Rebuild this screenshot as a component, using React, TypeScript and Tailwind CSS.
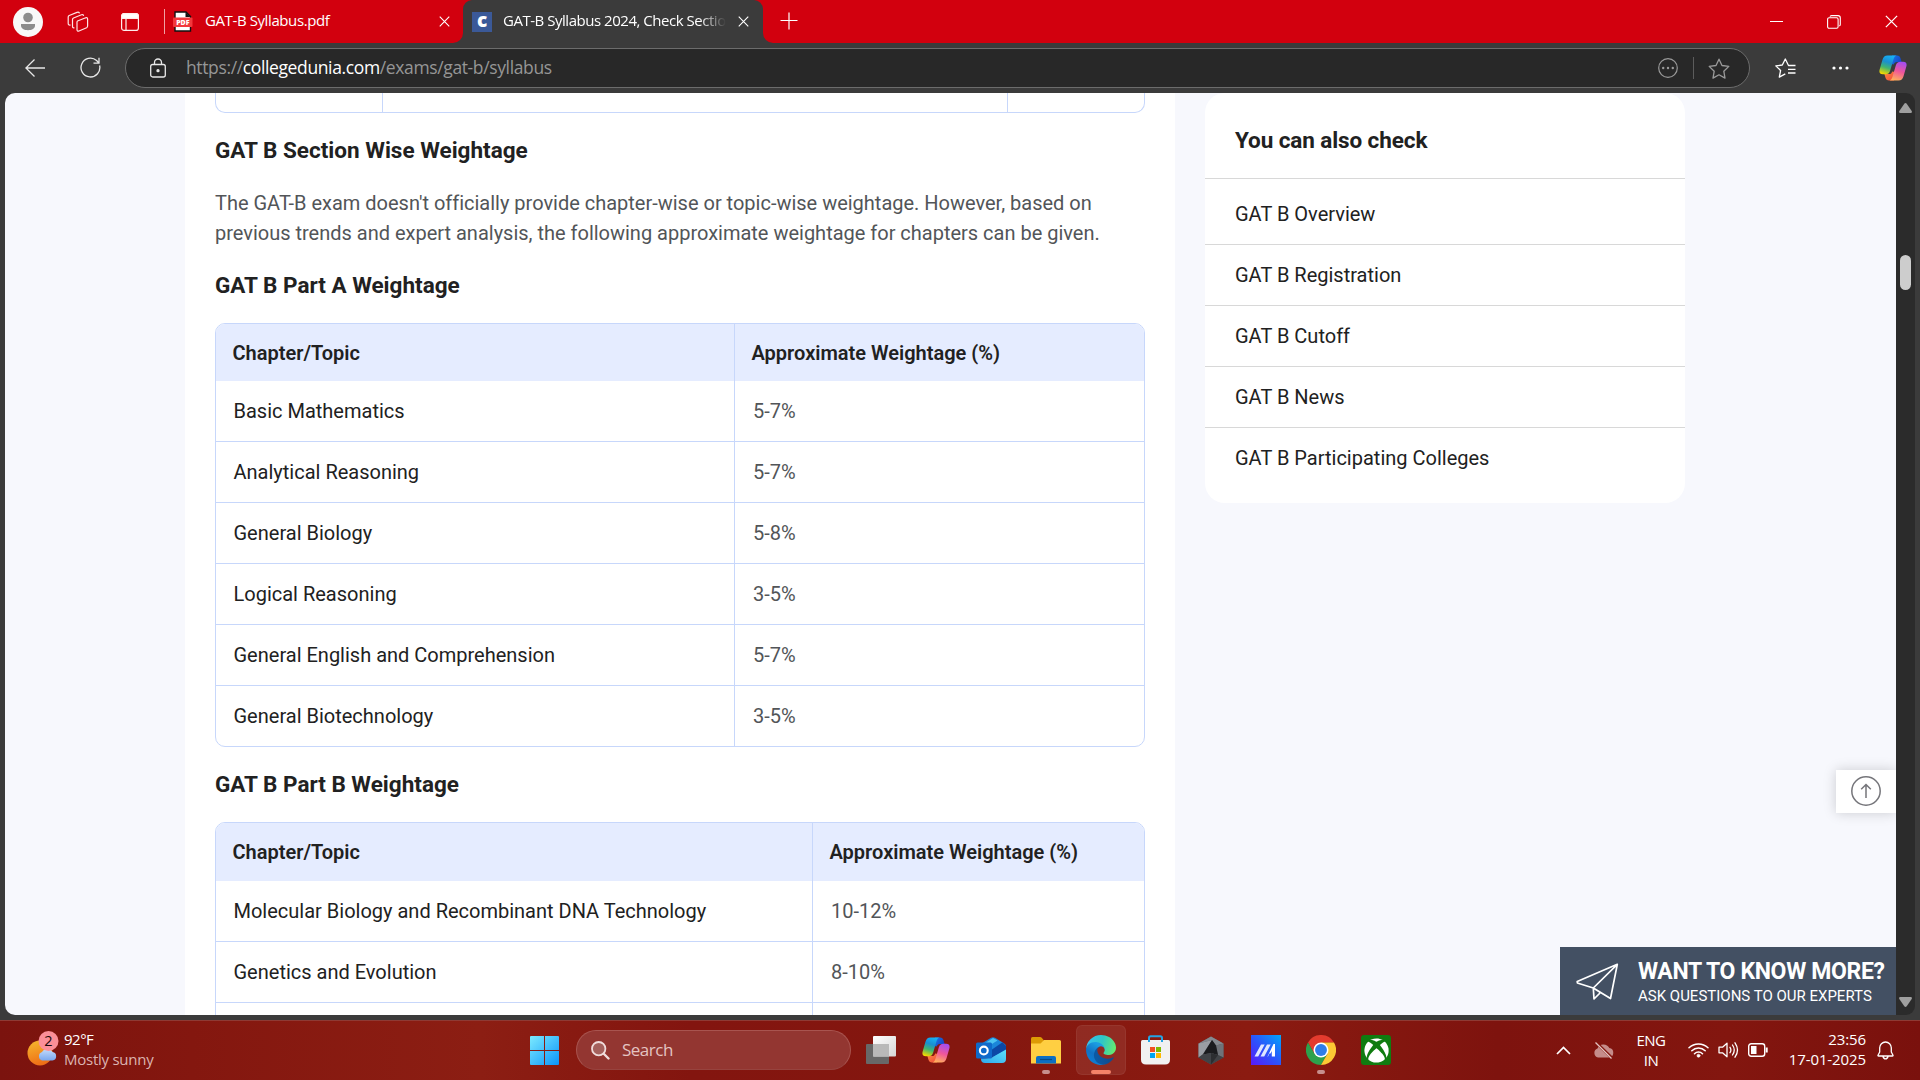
import React from "react";
import { FaXbox } from "react-icons/fa";

const PART_A = [
  ["Basic Mathematics", "5-7%"],
  ["Analytical Reasoning", "5-7%"],
  ["General Biology", "5-8%"],
  ["Logical Reasoning", "3-5%"],
  ["General English and Comprehension", "5-7%"],
  ["General Biotechnology", "3-5%"],
];

const PART_B = [
  ["Molecular Biology and Recombinant DNA Technology", "10-12%"],
  ["Genetics and Evolution", "8-10%"],
  ["", ""],
];

const LINKS = [
  "GAT B Overview",
  "GAT B Registration",
  "GAT B Cutoff",
  "GAT B News",
  "GAT B Participating Colleges",
];

function CloseIcon({ size, className = "" }: { size: number; className?: string }) {
  return (
    <svg width={size} height={size} viewBox="0 0 12 12" className={"shrink-0 " + className} fill="none" stroke="white" strokeWidth="1.2">
      <path d="M.8 .8 11.2 11.2M11.2 .8 .8 11.2" />
    </svg>
  );
}

function Copilot({ id }: { id: string }) {
  return (
    <svg width="28" height="26" viewBox="0 0 28 26" className="shrink-0">
      <defs>
        <linearGradient id={id + "a"} x1="0.6" y1="0" x2="0.3" y2="1">
          <stop offset="0" stopColor="#16b0f5" />
          <stop offset=".35" stopColor="#1a8fd0" />
          <stop offset=".65" stopColor="#42b56f" />
          <stop offset="1" stopColor="#f5d800" />
        </linearGradient>
        <linearGradient id={id + "b"} x1="0" y1="0" x2="1" y2=".6">
          <stop offset="0" stopColor="#1b7bea" />
          <stop offset="1" stopColor="#1443c4" />
        </linearGradient>
        <linearGradient id={id + "c"} x1="0.65" y1="0" x2="0.35" y2="1">
          <stop offset="0" stopColor="#a44df0" />
          <stop offset=".5" stopColor="#f0569a" />
          <stop offset="1" stopColor="#ffb05c" />
        </linearGradient>
        <linearGradient id={id + "d"} x1="0" y1="0" x2="1" y2="1">
          <stop offset="0" stopColor="#ff8a3c" />
          <stop offset="1" stopColor="#f0493e" />
        </linearGradient>
      </defs>
      <path d="M13 .5h5c2 0 3 .9 3.6 3l1 3.5H18c-1.8 0-2.8 1-3.2 2.6L12 9z" fill={`url(#${id}b)`} />
      <path d="M15 25.5h-5c-2 0-3-.9-3.6-3l-1-3.500H10c1.800 0 2.800-1 3.200-2.600L16 17z" fill={`url(#${id}d)`} />
      <path d="M8.500 .5H17.500C16 .9 15.200 2 14.600 4L11.200 15.500C10.400 18.200 9 19.300 6.500 19.300H3.800C1 19.300-.1 17.500 .6 14.800L3.400 5C4.300 1.800 5.800 .5 8.500 .5Z" fill={`url(#${id}a)`} />
      <path d="M19.500 25.500H10.500C12 25.100 12.800 24 13.400 22L16.800 10.500C17.600 7.800 19 6.700 21.500 6.700H24.200C27 6.700 28.100 8.500 27.400 11.200L24.600 21C23.700 24.200 22.200 25.500 19.500 25.500Z" fill={`url(#${id}c)`} />
    </svg>
  );
}

function TabStrip() {
  return (
    <header className="flex h-[43px] shrink-0 items-center bg-[#d2000e] pl-[13px] text-[15px] text-white">
      <svg width="30" height="30" viewBox="0 0 30 30" className="shrink-0">
        <circle cx="15" cy="15" r="15" fill="#f8f8f8" />
        <circle cx="15" cy="10.500" r="4.800" fill="#8c8c8c" />
        <path d="M8 17h14v1.500c0 3-3 4.700-7 4.700s-7-1.700-7-4.700z" fill="#8c8c8c" />
      </svg>
      <svg width="22" height="22" viewBox="0 0 22 22" className="ml-[24px] shrink-0" fill="none" stroke="#ffe3e4" strokeWidth="1.200" strokeLinejoin="round" strokeLinecap="round">
        <path d="M10.500 10 18.700 6.800q1.800-.5 1.900 1.200V15q0 1.200-1 1.700L12 20q-1.900.6-2-1.200v-7.500q0-1 .5-1.300Z" />
        <path d="M7 16.800q-1.500.2-1.500-1.500V8.500q0-1 1-1.500l8-3.300q1.600-.5 2 .7" />
        <path d="M3.200 14q-2 .3-2-1.500V6q0-1 1-1.500L10 1.400q1.700-.6 2.300.5" />
      </svg>
      <svg width="18" height="18" viewBox="0 0 18 18" className="ml-[32px] shrink-0" fill="none" stroke="#ffecec" strokeWidth="1.200">
        <rect x=".6" y=".6" width="16.800" height="16.800" rx="2.500" />
        <path d="M.6 3a2.400 2.400 0 0 1 2.400-2.400h12a2.400 2.400 0 0 1 2.400 2.400v2.400H.6zM5 5v12.500" fill="white" />
      </svg>
      <span className="ml-[25px] h-[25px] w-px shrink-0 bg-[#f0a0a4]" />
      <svg width="20" height="21" viewBox="0 0 20 21" className="ml-[8px] shrink-0">
        <path d="M2 1h11l4.500 4.500V20H2z" fill="white" stroke="#111" strokeWidth="1.400" />
        <path d="M12.500 1v5h5z" fill="#111" />
        <rect x="0" y="6.500" width="19.500" height="9.500" rx="1" fill="#f2383c" />
        <text x="9.800" y="14" fontSize="7" fontWeight="800" textAnchor="middle" fill="white" fontFamily="Open Sans, sans-serif">PDF</text>
      </svg>
      <span className="ml-[12px] w-[234px] shrink-0 whitespace-nowrap pb-[2px] tracking-[-0.400px]">GAT-B Syllabus.pdf</span>
      <CloseIcon size={11} />
      <div className="ml-[3px] flex h-full w-[10px] shrink-0 items-end bg-[#3b3b3b]">
        <div className="h-full w-full rounded-br-[10px] bg-[#d2000e]" />
      </div>
      <div className="flex h-full w-[300px] shrink-0 items-center bg-[#d2000e]">
        <div className="flex h-full w-full items-center rounded-t-[9px] bg-[#3b3b3b]">
          <div className="ml-[9px] flex h-5 w-5 shrink-0 items-center justify-center bg-[#3b5998] pb-[3px] text-[19px] font-extrabold">c</div>
          <span className="ml-[11px] w-[223px] shrink-0 overflow-hidden whitespace-nowrap pb-[2px] tracking-[-0.470px] [mask-image:linear-gradient(to_right,black_88%,transparent)]">
            GAT-B Syllabus 2024, Check Sectio
          </span>
          <CloseIcon size={11} className="ml-[12px]" />
        </div>
      </div>
      <div className="h-full w-[10px] shrink-0 bg-[#3b3b3b]">
        <div className="h-full w-full rounded-bl-[10px] bg-[#d2000e]" />
      </div>
      <svg width="18" height="18" viewBox="0 0 18 18" className="mb-px ml-[7px] shrink-0" stroke="white" strokeWidth="1.200">
        <path d="M9 .5v17M.5 8.500h17" />
      </svg>
      <div className="ml-auto flex shrink-0 items-center pr-[22px]">
        <span className="h-px w-[13px] bg-white" />
        <svg width="14" height="14" viewBox="0 0 14 14" className="ml-[44px]" fill="none" stroke="white" strokeWidth="1.100">
          <rect x=".6" y="2.800" width="10.500" height="10.500" rx="1.500" />
          <path d="M3 1.700Q3.300.6 4.500.6h6.500q2.300 0 2.300 2.300v6.600q0 1-1 1.500" />
        </svg>
        <CloseIcon size={13} className="ml-[44px]" />
      </div>
    </header>
  );
}

function Toolbar() {
  return (
    <div className="flex h-[50px] shrink-0 items-center bg-[#3b3b3b] pl-[25px]">
      <svg width="20" height="18" viewBox="0 0 20 18" className="mb-px shrink-0" fill="none" stroke="#e8e8e8" strokeWidth="1.300">
        <path d="M9.500.5.9 9l8.600 8.500M1 9h19" />
      </svg>
      <svg width="21" height="21" viewBox="0 0 21 21" className="mb-px ml-[35px] shrink-0" fill="none" stroke="#e8e8e8" strokeWidth="1.300">
        <path d="M19.600 8.500a9.400 9.400 0 1 1-3-5l2.400 2.600M19 .8v5.400h-5.500" />
      </svg>
      <div className="ml-[24px] flex h-[40px] w-[1625px] shrink-0 items-center rounded-full border border-[#6c6c6c] bg-[#282828] pl-[23.500px]">
        <svg width="16" height="20" viewBox="0 0 16 20" className="mb-px shrink-0" fill="none" stroke="#e8e8e8" strokeWidth="1.300">
          <rect x=".7" y="6.500" width="14.600" height="12.500" rx="2" />
          <path d="M4.500 6.500V4.500a3.500 3.500 0 0 1 7 0v2" />
          <circle cx="8" cy="12.700" r="1" fill="#e8e8e8" />
        </svg>
        <span className="ml-[20.500px] whitespace-nowrap pb-[2px] text-[17.500px] tracking-[-0.370px] text-[#969696]">
          https://<span className="text-white">collegedunia.com</span>/exams/gat-b/syllabus
        </span>
        <svg width="20" height="20" viewBox="0 0 20 20" className="ml-auto shrink-0" fill="none" stroke="#9a9a9a" strokeWidth="1.200">
          <circle cx="10" cy="10" r="9.300" />
          <g fill="#9a9a9a" stroke="none"><circle cx="5.200" cy="10" r="1.200" /><circle cx="10" cy="10" r="1.200" /><circle cx="14.800" cy="10" r="1.200" /></g>
        </svg>
        <span className="ml-[15px] h-[22px] w-px shrink-0 bg-[#5c5c5c]" />
        <svg width="22" height="21" viewBox="0 0 22 21" className="ml-[14px] mr-[19px] shrink-0" fill="none" stroke="#9a9a9a" strokeWidth="1.300" strokeLinejoin="round">
          <path d="m11 1.200 3 6.300 6.800.9-5 4.800 1.200 6.900-6-3.300-6 3.300 1.200-6.900-5-4.800 6.800-.9z" />
        </svg>
      </div>
      <svg width="21" height="20" viewBox="0 0 21 20" className="ml-[25px] shrink-0" fill="none" stroke="white" strokeWidth="1.300" strokeLinejoin="round">
        <path d="M20.500 7.500H13.500L10.300 1 7.300 7l-6.500.9 4.800 4.600-1.300 6.600 6-3.200M13 11.300h7.500M13 15h7.500" />
      </svg>
      <svg width="17" height="4" viewBox="0 0 17 4" className="mb-px ml-[36px] shrink-0" fill="white">
        <circle cx="2" cy="2" r="1.600" /><circle cx="8.500" cy="2" r="1.600" /><circle cx="15" cy="2" r="1.600" />
      </svg>
      <div className="ml-[30px]"><Copilot id="tb" /></div>
    </div>
  );
}

function WeightTable({ rows, first, head }: { rows: string[][]; first: string; head: string }) {
  return (
    <div className="mt-[23px] shrink-0 overflow-hidden rounded-[10px] border border-[#c7d7fb]">
      <div className={"flex bg-[#e5ecff] text-[20px] font-semibold text-[#212121] " + head}>
        <div className={"flex shrink-0 items-center border-r border-[#c7d7fb] pl-[16.500px] " + first}>Chapter/Topic</div>
        <div className="flex items-center pl-[16.500px]">Approximate Weightage (%)</div>
      </div>
      {rows.map(([topic, weight]) => (
        <div key={topic} className="flex h-[61px] border-b border-[#c7d7fb] text-[20px] last:h-[60px] last:border-b-0">
          <div className={"flex shrink-0 items-center border-r border-[#c7d7fb] pl-[17.500px] text-[#212121] " + first}>{topic}</div>
          <div className="flex items-center pl-[18px] text-[#525558]">{weight}</div>
        </div>
      ))}
    </div>
  );
}

function SectionTitle({ children }: { children: React.ReactNode }) {
  return <h2 className="mt-[22px] h-[30px] shrink-0 text-[22.500px] font-bold leading-[30px] text-[#212121]">{children}</h2>;
}

function Page() {
  return (
    <div className="relative flex h-[922px] w-[1891px] items-start overflow-hidden rounded-l-[10px] bg-[#f7f8fd] pl-[180px] font-[Roboto,sans-serif]">
      <main className="flex h-[922px] w-[990px] shrink-0 flex-col overflow-hidden bg-white px-[30px]">
        <div className="flex h-[20px] shrink-0 rounded-b-[10px] border border-t-0 border-[#c7d7fb]">
          <div className="w-[167px] border-r border-[#c7d7fb]" />
          <div className="w-[625px] border-r border-[#c7d7fb]" />
        </div>
        <SectionTitle>GAT B Section Wise Weightage</SectionTitle>
        <p className="mt-[23px] shrink-0 whitespace-nowrap text-[20px] leading-[30px] tracking-[-0.008px] text-[#525558]">
          The GAT-B exam doesn't officially provide chapter-wise or topic-wise weightage. However, based on
          <br />
          previous trends and expert analysis, the following approximate weightage for chapters can be given.
        </p>
        <SectionTitle>GAT B Part A Weightage</SectionTitle>
        <WeightTable rows={PART_A} first="w-[519px]" head="h-[57px]" />
        <SectionTitle>GAT B Part B Weightage</SectionTitle>
        <WeightTable rows={PART_B} first="w-[597px]" head="h-[58px]" />
      </main>
      <aside className="ml-[30px] h-[410px] w-[480px] shrink-0 rounded-[20px] bg-white text-[#212121]">
        <h3 className="flex h-[86px] items-center border-b border-[#d8d8d8] pl-[30px] pt-[11px] text-[22.500px] font-bold tracking-[-0.100px]">You can also check</h3>
        <ul className="pt-[5px]">
          {LINKS.map((l) => (
            <li key={l} className="flex h-[61px] items-center border-b border-[#d8d8d8] pl-[30px] text-[20px] last:h-[60px] last:border-b-0">{l}</li>
          ))}
        </ul>
      </aside>
      <button className="absolute right-0 top-[677px] flex h-[43px] w-[60px] items-center justify-center bg-white pb-px shadow-[0_0_12px_rgba(0,0,0,0.18)]">
        <svg width="30" height="30" viewBox="0 0 30 30" fill="none" stroke="#75757a" strokeWidth="1.500">
          <circle cx="15" cy="15" r="14.200" />
          <path d="M15 22V8.800M10.200 13.300 15 8.500l4.800 4.800" />
        </svg>
      </button>
      <div className="absolute bottom-0 right-0 flex h-[68px] w-[336px] items-start bg-[#435063] pl-[16px] text-white">
        <svg width="43" height="38" viewBox="0 0 43 38" className="mt-[16px] shrink-0" fill="none" stroke="white" strokeWidth="1.700" strokeLinejoin="round">
          <path d="M41.300 1.300 1.200 18.500l.2 1.500 15.900 5L34.500 35.500zM41.300 1.300 17.300 25l.7 11 6.500-6.500M17.300 25l7.200 4.500" />
        </svg>
        <div className="ml-[19px] mt-[10px] whitespace-nowrap">
          <div className="text-[23px] font-bold leading-[29px] tracking-[-0.350px]">WANT TO KNOW MORE?</div>
          <div className="text-[15px] leading-[20px]">ASK QUESTIONS TO OUR EXPERTS</div>
        </div>
      </div>
    </div>
  );
}

function Scrollbar() {
  return (
    <div className="flex w-[19px] flex-col items-center rounded-r-[9px] bg-[#2b2b2b] pr-px">
      <svg width="13" height="10" viewBox="0 0 13 10" className="mt-[10px]" fill="#9f9f9f"><path d="M5.300.8q1.200-1.500 2.400 0L12.700 8q.8 2-1 2H1.300q-1.800 0-1-2z" /></svg>
      <div className="mt-[142px] h-[35px] w-[11px] rounded-full bg-[#cdcdcd]" />
      <svg width="13" height="10" viewBox="0 0 13 10" className="mb-[8px] mt-auto" fill="#9f9f9f"><path d="M5.300 9.200q1.200 1.500 2.400 0L12.700 2q.8-2-1-2H1.300q-1.800 0-1 2z" /></svg>
    </div>
  );
}

function TaskbarApp({ children, mark = "" }: { children: React.ReactNode; mark?: string }) {
  return (
    <div className={"relative flex h-[50px] w-[50px] shrink-0 items-center justify-center rounded-[6px] " + (mark === "active" ? "bg-white/8 ring-1 ring-inset ring-white/5" : "")}>
      {children}
      {mark === "open" && <span className="absolute bottom-[1px] h-[4px] w-[8px] rounded-full bg-[#c78f8d]" />}
      {mark === "active" && <span className="absolute bottom-[1px] h-[4px] w-[20px] rounded-full bg-[#f58268]" />}
    </div>
  );
}

function Taskbar() {
  return (
    <footer className="flex h-[60px] shrink-0 items-center border-t border-[#8f3a34] bg-[linear-gradient(90deg,#7b130e_0%,#84170f_10%,#8c1e13_25%,#83150f_36%,#84170f_50%,#8b1b11_65%,#7e130e_78%,#83160f_90%,#7a110d_100%)] pb-px text-[15px] text-white">
      <div className="ml-[26px] mb-[2px] flex w-[504px] shrink-0 items-center">
        <svg width="36" height="38" viewBox="0 0 36 38" className="mb-[2px] shrink-0">
          <defs>
            <linearGradient id="sun" x1=".2" y1="0" x2=".5" y2="1"><stop offset="0" stopColor="#f6b62d" /><stop offset="1" stopColor="#ee6c16" /></linearGradient>
            <linearGradient id="cloud" x1="0" y1="0" x2="0" y2="1"><stop offset="0" stopColor="#c4dcfb" /><stop offset="1" stopColor="#7aa7ee" /></linearGradient>
          </defs>
          <circle cx="14" cy="24" r="12.500" fill="url(#sun)" />
          <path d="M16 31.500a4.500 4.500 0 0 1 0-8.500 6 6 0 0 1 10.500 0 4.300 4.300 0 0 1 0 8.500z" fill="url(#cloud)" />
          <circle cx="22.500" cy="12" r="10" fill="#fb8f98" />
          <text x="22.500" y="17.200" fontSize="14.500" textAnchor="middle" fill="#1b0b0b" fontFamily="Open Sans, sans-serif">2</text>
        </svg>
        <div className="ml-[2px] whitespace-nowrap leading-[20px]">
          <div className="tracking-[-0.500px]">92°F</div>
          <div className="tracking-[-0.250px] text-[#dcb3b0]">Mostly sunny</div>
        </div>
      </div>
      <svg width="29" height="29" viewBox="0 0 29 29" className="shrink-0">
        <defs><linearGradient id="win" x1="0" y1="0" x2="1" y2="1"><stop offset="0" stopColor="#7ceafe" /><stop offset="1" stopColor="#0b94fa" /></linearGradient></defs>
        <path d="M0 1q0-1 1-1h13v14H0zM15 0h13q1 0 1 1v13H15zM0 15h14v14H1q-1 0-1-1zM15 15h14v13q0 1-1 1H15z" fill="url(#win)" />
      </svg>
      <div className="ml-[17px] flex h-[40px] w-[275px] shrink-0 items-center rounded-full border border-[#a8544f] border-b-[#97433e] bg-[#933631] pl-[14px]">
        <svg width="19" height="19" viewBox="0 0 19 19" fill="none" stroke="#f0dcdb" strokeLinecap="round">
          <circle cx="7.700" cy="7.700" r="6.700" strokeWidth="1.800" fill="#a5605c" /><path d="m13 13 4.500 4.500" strokeWidth="2.400" />
        </svg>
        <span className="ml-[12px] text-[17px] tracking-[-0.500px] text-[#e4c4c2]">Search</span>
      </div>
      <div className="ml-[5px] flex shrink-0 gap-[5px]">
        <TaskbarApp>
          <svg width="30" height="28" viewBox="0 0 30 28">
            <defs><linearGradient id="tv" x1="0" y1="0" x2="1" y2="1"><stop offset="0" stopColor="#fff" /><stop offset="1" stopColor="#d6d6d6" /></linearGradient></defs>
            <rect x="0" y="8" width="23" height="20" rx="1" fill="#686868" />
            <rect x="7" y="0" width="23" height="20.500" rx="1" fill="url(#tv)" />
            <path d="M7 8h16v12.500H7z" fill="#b9b9b9" />
          </svg>
        </TaskbarApp>
        <TaskbarApp><Copilot id="task" /></TaskbarApp>
        <TaskbarApp>
          <svg width="30" height="27" viewBox="0 0 30 27">
            <defs><linearGradient id="ol" x1="1" y1="0" x2="0" y2="1"><stop offset="0" stopColor="#5ee0f8" /><stop offset="1" stopColor="#2fa8ec" /></linearGradient></defs>
            <path d="M5 8.500Q5 7 6.500 6L15 .8q2-1.200 4 0l9 5.400q2 1.200 2 3.300V18L5 22z" fill="#1b86da" />
            <path d="M7 7.500 17 1l4.500 2.500L8 12z" fill="#4cc4f2" />
            <path d="m16 12.500 10.500-7.300L30 9v4L15 21z" fill="#0c48a6" />
            <path d="M30 12.500v9.500q0 4-4 4H9q-4 0-4-4l11-1.500z" fill="url(#ol)" />
            <rect x="0" y="5.500" width="16" height="16" rx="1.500" fill="#0f6acb" />
            <circle cx="7.800" cy="13.500" r="3.900" fill="none" stroke="white" strokeWidth="2.100" />
          </svg>
        </TaskbarApp>
        <TaskbarApp mark="open">
          <svg width="30" height="27" viewBox="0 0 30 27">
            <path d="M0 1.500Q0 0 1.500 0H9q1 0 1.700.7L13 3.500V8H0z" fill="#dd9b05" />
            <path d="M0 6.500h9.500L13 3h15.500Q30 3 30 4.500v22H0z" fill="#ffcf42" />
            <path d="M5 26.500V21q0-2 2-2h16q2 0 2 2v5.500z" fill="#0d6fc2" /><path d="M9 22.500h12" stroke="#084a86" strokeWidth="1.200" />
          </svg>
        </TaskbarApp>
        <TaskbarApp mark="active">
          <svg width="30" height="30" viewBox="0 0 256 256">
            <defs>
              <linearGradient id="e1" x1=".2" y1=".7" x2="1" y2=".7"><stop offset="0" stopColor="#0c59a4" /><stop offset="1" stopColor="#114a8b" /></linearGradient>
              <linearGradient id="e2" x1=".7" y1=".2" x2=".3" y2="1"><stop offset="0" stopColor="#1b9de2" /><stop offset=".5" stopColor="#1272c4" /><stop offset="1" stopColor="#0a80d8" /></linearGradient>
              <linearGradient id="e3" x1="0" y1=".4" x2="1" y2=".6"><stop offset="0" stopColor="#35c1f1" /><stop offset=".5" stopColor="#2fc6c6" /><stop offset="1" stopColor="#66eb6e" /></linearGradient>
            </defs>
            <path fill="url(#e1)" d="M231.070 190.540c-3.400 1.770-6.920 3.350-10.540 4.730a101.900 101.900 0 0 1-35.800 6.460c-47.190 0-88.300-32.460-88.300-74.120a31.380 31.380 0 0 1 16.370-27.310c-42.690 1.800-53.660 46.280-53.660 72.340 0 73.690 67.910 81.160 82.540 81.160 7.890 0 19.790-2.300 26.930-4.550l1.310-.44a128.340 128.340 0 0 0 66.600-52.800 4 4 0 0 0-5.450-5.470z" />
            <path fill="url(#e2)" d="M105.730 241.420a79.200 79.200 0 0 1-22.740-21.340 80.720 80.720 0 0 1 29.820-119.780c3.120-1.470 8.450-4.130 15.550-4a32.350 32.350 0 0 1 25.690 13 31.880 31.880 0 0 1 6.360 18.660c0-.21 24.460-79.600-80-79.600-43.900 0-80 41.660-80 78.210a130.150 130.150 0 0 0 12.110 56 128 128 0 0 0 156.380 67.110 75.550 75.550 0 0 1-62.780-8z" />
            <path fill="url(#e3)" d="M152.330 148.860c-.81 1.050-3.300 2.500-3.300 5.660 0 2.610 1.700 5.120 4.720 7.230 14.380 10 41.490 8.680 41.560 8.680a59.560 59.560 0 0 0 30.270-8.350A61.380 61.380 0 0 0 256 109.200c.26-22.410-8-37.310-11.340-43.910C223.460 23.840 177.720 0 128 0A128 128 0 0 0 .01 126.200c.48-36.540 36.800-66.050 80-66.050 3.500 0 23.460.34 42 10.070 16.340 8.580 24.900 18.940 30.850 29.210 6.180 10.670 7.280 24.150 7.280 29.520 0 5.370-2.740 13.330-7.810 19.910z" />
          </svg>
        </TaskbarApp>
        <TaskbarApp>
          <svg width="30" height="30" viewBox="0 0 30 30">
            <path d="M8 6V3q0-1.700 1.700-1.700h9.600Q21 1.300 21 3v3" fill="none" stroke="#24a4e4" strokeWidth="2" />
            <path d="M0 6.500Q0 5 1.500 5h26Q29 5 29 6.500V24.500q0 5-5 5H5q-5 0-5-5z" fill="#f1f1f1" />
            <path d="M7 5h2v2H7zM20 5h2v2h-2z" fill="#24a4e4" />
            <path d="M9 12h5v5H9z" fill="#f25022" /><path d="M15 12h5v5h-5z" fill="#7fba00" /><path d="M9 18h5v5H9z" fill="#00a4ef" /><path d="M15 18h5v5h-5z" fill="#ffb900" />
          </svg>
        </TaskbarApp>
        <TaskbarApp>
          <svg width="26" height="29" viewBox="0 0 26 29">
            <path d="m13 .5 12.500 7v14L13 28.500.5 21.500v-14z" fill="#54575c" />
            <path d="m13 .5 12.500 7-7.500 2-4-5.500L.5 7.500z" fill="#85898f" />
            <path d="M25.500 7.500 18 9.500l2 9.500 5.500 2.500z" fill="#6f7379" />
            <path d="M.5 7.500 14 4 5 18l-4.500 3.500z" fill="#9a9ea4" />
            <path d="M14 4 5 18.500l8-1.500 7 2L18 9.500z" fill="#1b1c1f" />
            <path d="m.5 21.500 4.500-3 8-1.500 7 2 5.500 2.500-12.500 7z" fill="#404347" />
            <path d="m13 17 7 2-7 9.500z" fill="#2c2e31" />
          </svg>
        </TaskbarApp>
        <TaskbarApp>
          <svg width="30" height="30" viewBox="0 0 30 30">
            <defs><linearGradient id="asus" x1="1" y1="0" x2="0" y2="1"><stop offset="0" stopColor="#00a6fb" /><stop offset=".5" stopColor="#2b55fb" /><stop offset="1" stopColor="#5a18f8" /></linearGradient></defs>
            <path d="M0 0h30v30H0z" fill="url(#asus)" />
            <path d="M3.500 21.500 10 9.500h3.700L7.200 21.500zM9.500 21.500l6.500-12h3.700L13.200 21.500z" fill="#dfe6ff" />
            <path d="M16.500 21.500 22.500 9H24v12.500h-3.200v-5.500l-1.300 2.500h-1.200l-1.300 3z" fill="white" />
          </svg>
        </TaskbarApp>
        <TaskbarApp mark="open">
          <svg width="30" height="30" viewBox="0 0 48 48">
            <path d="M3.200 12A24 24 0 0 1 44.800 12H24L13.600 30Z" fill="#e33b2e" />
            <path d="M3.200 12A24 24 0 0 0 24 48L34.400 30H13.600Z" fill="#2da14c" />
            <path d="M44.800 12A24 24 0 0 1 24 48L34.400 30 24 12Z" fill="#fcc934" />
            <circle cx="24" cy="24" r="12" fill="white" /><circle cx="24" cy="24" r="9.500" fill="#2f7de9" />
          </svg>
        </TaskbarApp>
        <TaskbarApp>
          <div className="flex h-[30px] w-[30px] items-center justify-center rounded-[3px] bg-[#107c10]"><FaXbox size={25} color="white" /></div>
        </TaskbarApp>
      </div>
      <div className="ml-auto flex shrink-0 items-center pr-[26px]">
        <svg width="15" height="9" viewBox="0 0 15 9" fill="none" stroke="white" strokeWidth="1.700"><path d="M1 8 7.500 1.500 14 8" /></svg>
        <svg width="21" height="17" viewBox="0 0 21 17" className="ml-[22px]">
          <path d="M5 15.500a4.700 4.700 0 0 1-.5-9A6.500 6.500 0 0 1 16.300 6a4.800 4.800 0 0 1-.3 9.500z" fill="#c58c8a" />
          <path d="m2.500 0 17 16.500" stroke="#84160f" strokeWidth="3" /><path d="m2.500 .5 16 16" stroke="#e2c3c1" strokeWidth="1.300" />
        </svg>
        <div className="mb-px ml-[21px] w-[32px] text-center text-[15px] leading-[20px] tracking-[-0.500px]">ENG<br />IN</div>
        <svg width="21" height="16" viewBox="0 0 21 16" className="ml-[21px]" fill="none" stroke="white" strokeWidth="1.500" strokeLinecap="round">
          <path d="M1 5.800a13.500 13.500 0 0 1 19 0M3.800 8.800a9.500 9.500 0 0 1 13.400 0M6.500 11.700a5.700 5.700 0 0 1 8 0" /><circle cx="10.500" cy="13.700" r="1.500" fill="white" strokeWidth=".6" />
        </svg>
        <svg width="21" height="18" viewBox="0 0 21 18" className="ml-[9px]" fill="none" stroke="white" strokeWidth="1.300" strokeLinejoin="round" strokeLinecap="round">
          <path d="M1 6.200h3.500L9 2.200v13.600l-4.500-4H1zM12 6.300q1.800 2.700 0 5.400M14.500 4q3.500 5 0 10M17 1.800q5 7.200 0 14.400" />
        </svg>
        <svg width="20" height="14" viewBox="0 0 20 14" className="ml-[9px]" fill="none" stroke="white" strokeWidth="1.400">
          <rect x=".7" y=".7" width="16" height="12.600" rx="2.500" /><path d="M3 3h5.500v8H3z" fill="white" stroke="none" /><path d="M18.700 4.500v5" strokeWidth="2" />
        </svg>
        <div className="mb-[2px] ml-[14px] w-[84px] text-right text-[15px] leading-[20px] tracking-[-0.100px]">23:56<br />17-01-2025</div>
        <svg width="17" height="19" viewBox="0 0 17 19" className="ml-[11px]" fill="none" stroke="white" strokeWidth="1.300" strokeLinejoin="round">
          <path d="M8.500 1a5.800 5.800 0 0 1 5.800 5.800v4.200l1.700 3.200q.2.800-.6.800H1.600q-.8 0-.6-.8L2.700 11V6.800A5.800 5.800 0 0 1 8.500 1ZM6 15.500q.5 2.300 2.500 2.300t2.500-2.300" />
        </svg>
      </div>
    </footer>
  );
}

export default function App() {
  return (
    <div className="flex h-[1080px] w-[1920px] flex-col overflow-hidden bg-[#3b3b3b] font-['Open_Sans',sans-serif]">
      <TabStrip />
      <Toolbar />
      <div className="flex h-[927px] shrink-0 px-[5px] pb-[5px]">
        <Page />
        <Scrollbar />
      </div>
      <Taskbar />
    </div>
  );
}
